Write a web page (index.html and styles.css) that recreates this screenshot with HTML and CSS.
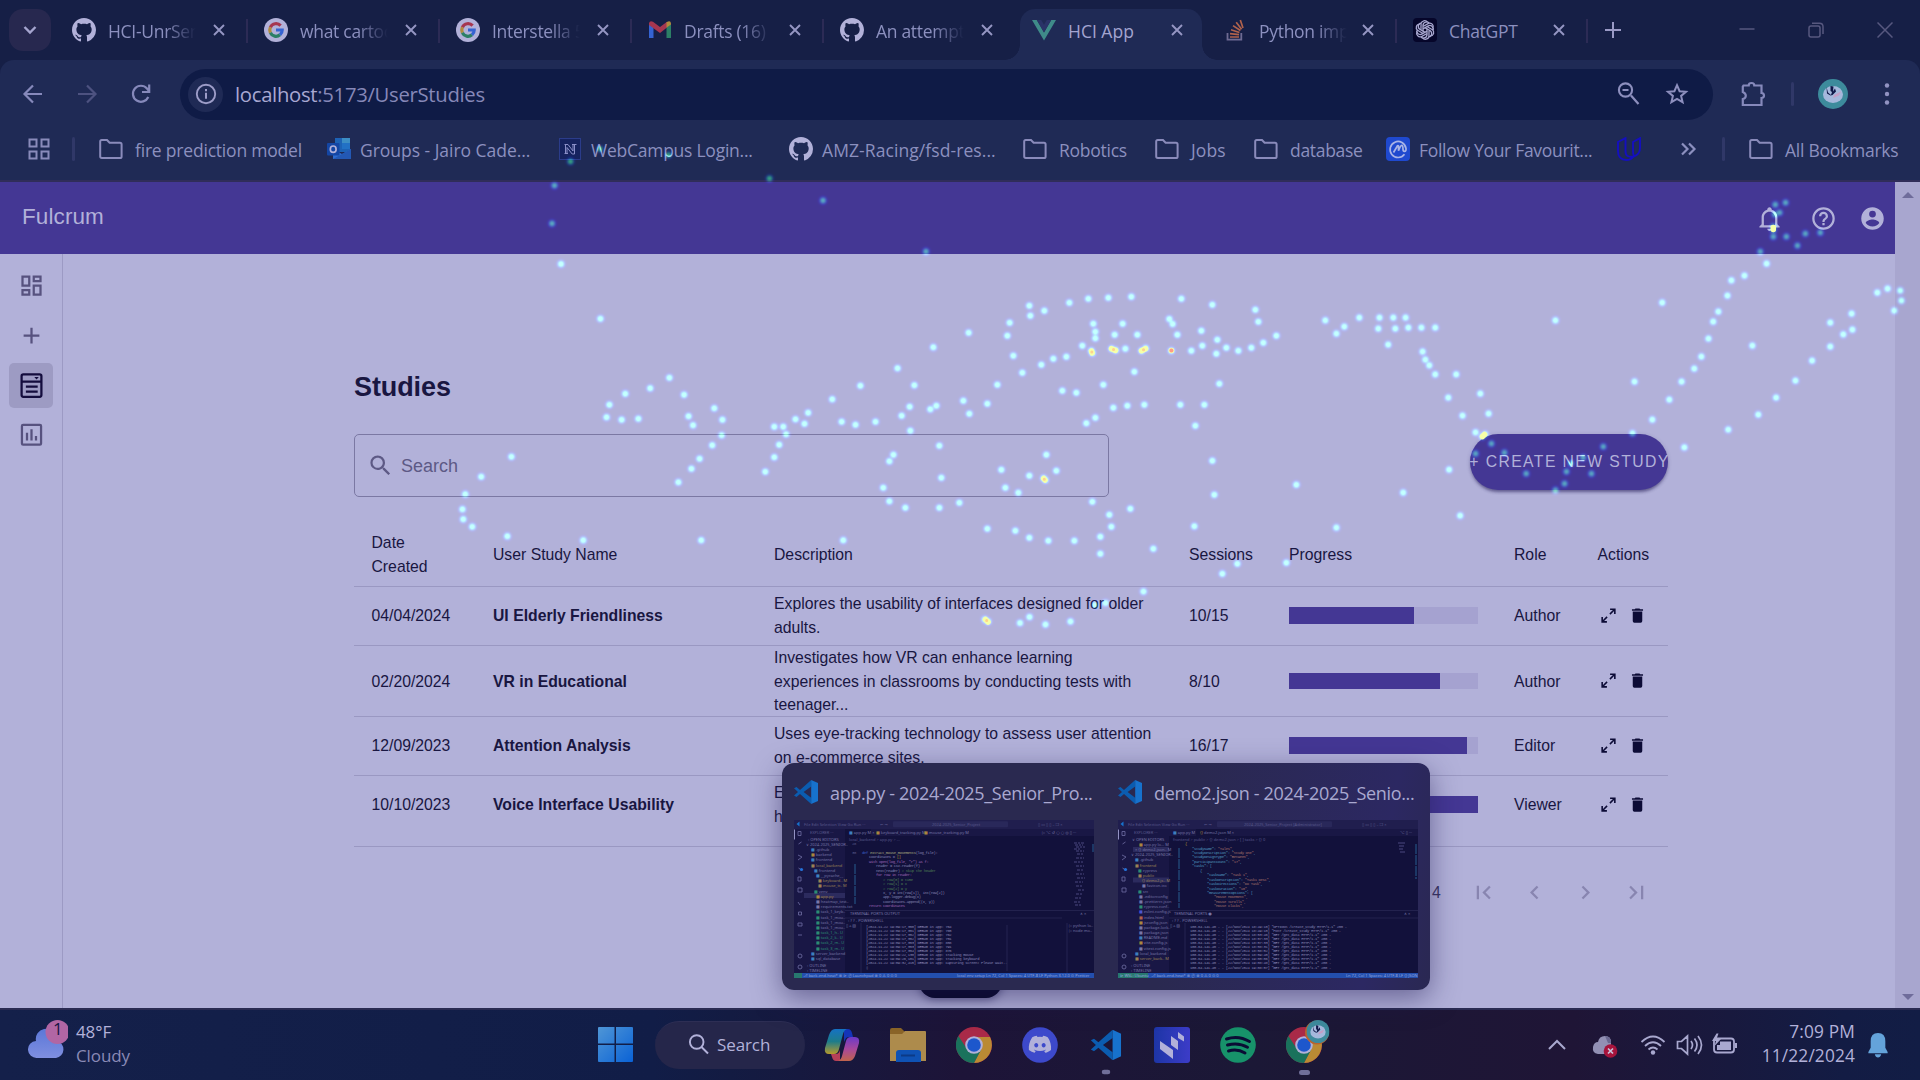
FILE: index.html
```html
<!DOCTYPE html>
<html lang="en">
<head>
<meta charset="utf-8">
<title>HCI App</title>
<link rel="stylesheet" href="styles.css">
</head>
<body>
<svg class="defs" width="0" height="0">
  <defs>
    <symbol id="github" viewBox="0 0 16 16"><path d="M8 0C3.58 0 0 3.58 0 8c0 3.54 2.29 6.53 5.47 7.59.4.07.55-.17.55-.38 0-.19-.01-.82-.01-1.49-2.01.37-2.53-.49-2.69-.94-.09-.23-.48-.94-.82-1.13-.28-.15-.68-.52-.01-.53.63-.01 1.08.58 1.23.82.72 1.21 1.87.87 2.33.66.07-.52.28-.87.51-1.07-1.78-.2-3.64-.89-3.64-3.95 0-.87.31-1.59.82-2.15-.08-.2-.36-1.02.08-2.12 0 0 .67-.21 2.2.82.64-.18 1.32-.27 2-.27.68 0 1.36.09 2 .27 1.53-1.04 2.2-.82 2.2-.82.44 1.1.16 1.92.08 2.12.51.56.82 1.27.82 2.15 0 3.07-1.87 3.75-3.65 3.95.29.25.54.73.54 1.48 0 1.07-.01 1.93-.01 2.2 0 .21.15.46.55.38A8.01 8.01 0 0 0 16 8c0-4.42-3.58-8-8-8z"/></symbol>
    <symbol id="google" viewBox="0 0 24 24"><circle cx="12" cy="12" r="12" fill="#b2b1d9"/><g fill="none" stroke-width="3.2"><path d="M16.600 7.600A6.200 6.200 0 0 0 6.400 9.300" stroke="#a63650"/><path d="M6.400 9.300A6.200 6.200 0 0 0 6.400 14.700" stroke="#b08a3e"/><path d="M6.400 14.700A6.200 6.200 0 0 0 16 16.800" stroke="#2c7f66"/><path d="M16 16.800A6.200 6.200 0 0 0 18.200 12H12" stroke="#3563d2"/></g></symbol>
    <symbol id="folder" viewBox="0 0 24 24"><path d="M1.200 19.600V4.500q0-1.500 1.500-1.500H8l2.600 2.800H21q1.600 0 1.600 1.600v12q0 1.600-1.600 1.600H2.800q-1.600 0-1.600-1.400z" fill="none" stroke="currentColor" stroke-width="2"/></symbol>
    <symbol id="vscode" viewBox="0 0 24 24"><path d="M17.200 0v6.400L9.600 12l7.600 5.700V24L6 14.100l-3.500 2.800L0 15.600 4 12 0 8.300 2.500 7 6 9.900z" fill="#0b5cb0"/><path d="M17.200 0 24 3v18l-6.800 3z" fill="#1772cd"/></symbol>
    <symbol id="chrome" viewBox="0 0 36 36"><circle cx="18" cy="18" r="18" fill="#a92a48"/><path d="M18 10H34A18 18 0 0 1 18 36L25 22z" fill="#ba8a34"/><path d="M2.400 9A18 18 0 0 0 18 36l7-13-7 3-7-4z" fill="#1a725c"/><circle cx="18" cy="18" r="8.800" fill="#b2b1d9"/><circle cx="18" cy="18" r="6.800" fill="#1d57cc"/></symbol>
    <symbol id="avatar" viewBox="0 0 30 30"><circle cx="15" cy="15" r="15" fill="#3d8b9c"/><ellipse cx="15" cy="15.500" rx="10" ry="8.500" fill="#a5b8dc"/><path d="m8.500 8 1.500 5.500 3 2.500 1-3-1.500-1V7l3 .500-.500 5 2-3 1 3-3.500 3.500-2 .5-3.500-2z" fill="#101848"/><path d="m16 16 7-3.500-2 4-6 2.500z" fill="#c59ec5"/></symbol>
    <symbol id="x" viewBox="0 0 12 12"><path d="m1 1 10 10M11 1 1 11" fill="none" stroke="currentColor" stroke-width="1.900"/></symbol>
    <symbol id="search" viewBox="0 0 24 24"><path d="M9.500,3A6.500,6.500 0 0,1 16,9.500C16,11.110 15.410,12.590 14.440,13.730L14.710,14H15.500L20.500,19L19,20.500L14,15.500V14.710L13.730,14.440C12.590,15.410 11.110,16 9.500,16A6.500,6.500 0 0,1 3,9.500A6.500,6.500 0 0,1 9.500,3M9.500,5C7,5 5,7 5,9.500C5,12 7,14 9.500,14C12,14 14,12 14,9.500C14,7 12,5 9.500,5Z"/></symbol>
    <symbol id="trash" viewBox="0 0 24 24"><path d="M19,4H15.500L14.500,3H9.500L8.500,4H5V6H19M6,19A2,2 0 0,0 8,21H16A2,2 0 0,0 18,19V7H6V19Z"/></symbol>
    <symbol id="expand" viewBox="0 0 24 24"><path d="M10,21V19H6.410L10.910,14.500L9.500,13.090L5,17.590V14H3V21H10M14.500,10.910L19,6.410V10H21V3H14V5H17.590L13.090,9.500L14.500,10.910Z"/></symbol>
    <symbol id="chev" viewBox="0 0 24 24"><path d="M15.410,16.580L10.830,12L15.410,7.410L14,6L8,12L14,18L15.410,16.580Z"/></symbol>
    <symbol id="first" viewBox="0 0 24 24"><path d="M18.410,16.590L13.820,12L18.410,7.410L17,6L11,12L17,18L18.410,16.590M6,6H8V18H6V6Z"/></symbol>
  </defs>
</svg>

<header class="tabstrip">
  <div class="tab-search"><svg width="14" height="10" viewBox="0 0 14 10"><path d="m1.500 2 5.500 5.500L12.500 2" fill="none" stroke="currentColor" stroke-width="2.400"/></svg></div>
  <div class="tab"><svg class="fav"><use href="#github"/></svg><span class="title fade">HCI-UnrSen</span><svg class="close"><use href="#x"/></svg></div>
  <div class="tab"><svg class="fav"><use href="#google"/></svg><span class="title fade">what cartoo</span><svg class="close"><use href="#x"/></svg></div>
  <div class="tab"><svg class="fav"><use href="#google"/></svg><span class="title fade">Interstella 5</span><svg class="close"><use href="#x"/></svg></div>
  <div class="tab"><svg class="fav" viewBox="0 0 24 24"><path d="M1 20V6l4.500 3.500V20z" fill="#3563d2"/><path d="M18.500 20V9.500L23 6v14z" fill="#2c7f66"/><path d="M1 7V5q1-3 4-1.200L12 9l7-5.200v5.700L12 15 1 7z" fill="#a63650"/><path d="M18.500 9.800V4.200Q22.500 2 23 5.200v1.300z" fill="#b08a3e"/></svg><span class="title fade">Drafts (16)</span><svg class="close"><use href="#x"/></svg></div>
  <div class="tab bare"><svg class="fav"><use href="#github"/></svg><span class="title fade">An attempt</span><svg class="close"><use href="#x"/></svg></div>
  <div class="tab active bare"><svg class="fav" viewBox="0 0 24 24"><path d="M0 2h4.800L12 14.500 19.200 2H24L12 22.500z" fill="#3f8b89"/><path d="M4.800 2h4.400L12 6.800 14.800 2h4.400L12 14.500z" fill="#2a3368"/></svg><span class="title">HCI App</span><svg class="close"><use href="#x"/></svg></div>
  <div class="tab so"><svg class="fav" viewBox="0 0 24 24"><path d="M4.500 15v6.700h13.800V15" fill="none" stroke="#6e6b93" stroke-width="1.800"/><path d="M7 19h9M7 15.600l9 1M8 11.800l8.400 2.700M10 7.600l7.400 4.900M13.200 4.200l5.400 7M17.300 2l2.700 8" stroke="#b0624c" stroke-width="1.700"/></svg><span class="title fade">Python imp</span><svg class="close"><use href="#x"/></svg></div>
  <div class="tab gpt"><svg class="fav" viewBox="0 0 24 24"><rect width="24" height="24" rx="4" fill="#06062a"/><g fill="none" stroke="#a9a8d0" stroke-width="1.300"><path id="petal" d="M10 13.200V7.100a3.500 3.500 0 0 1 6.500-1.400M10 8.500l5.500-3.100a3.500 3.500 0 0 1 4.300 5"/><use href="#petal" transform="rotate(60 12 12)"/><use href="#petal" transform="rotate(120 12 12)"/><use href="#petal" transform="rotate(180 12 12)"/><use href="#petal" transform="rotate(240 12 12)"/><use href="#petal" transform="rotate(300 12 12)"/></g></svg><span class="title">ChatGPT</span><svg class="close"><use href="#x"/></svg></div>
  <svg class="newtab" width="16" height="16" viewBox="0 0 16 16"><path d="M8 0v16M0 8h16" stroke="currentColor" stroke-width="2"/></svg>
  <div class="wincontrols">
    <svg width="16" height="16" viewBox="0 0 16 16"><path d="M.5 7h15" stroke="currentColor" stroke-width="1.500"/></svg>
    <svg width="16" height="16" viewBox="0 0 16 16"><g fill="none" stroke="currentColor" stroke-width="1.500"><rect x="1" y="4" width="11" height="11" rx="2"/><path d="M4 1.200h7.500q3.500 0 3.500 3.500V12"/></g></svg>
    <svg width="16" height="16" viewBox="0 0 16 16"><path d="m.5.5 15 15M15.500.5l-15 15" stroke="currentColor" stroke-width="1.500"/></svg>
  </div>
</header>

<nav class="toolbar">
  <svg class="tb" viewBox="0 0 54 54"><path d="M36 27H19M27 18.500 18.500 27l8.500 8.500" fill="none" stroke="currentColor" stroke-width="2.200"/></svg>
  <svg class="tb off" viewBox="0 0 54 54"><path d="M18 27h17M27 18.500l8.500 8.500-8.500 8.500" fill="none" stroke="currentColor" stroke-width="2.200"/></svg>
  <svg class="tb" viewBox="0 0 54 54"><path d="M34.300 30A8 8 0 1 1 33 21.500l2 2.500M35.200 17.500V25H28" fill="none" stroke="currentColor" stroke-width="2.200"/></svg>
  <div class="omnibox">
    <span class="info"><svg width="22" height="22" viewBox="0 0 22 22"><circle cx="11" cy="11" r="9.200" fill="none" stroke="currentColor" stroke-width="1.900"/><path d="M11 9.700v6M11 6v2.200" stroke="currentColor" stroke-width="2"/></svg></span>
    <span class="url"><b>localhost</b>:5173/UserStudies</span>
    <svg class="omni-icon" viewBox="0 0 24 24"><path d="M21.500 22 14 13.500M5.500 8h6" fill="none" stroke="currentColor" stroke-width="2.200"/><circle cx="8.500" cy="8" r="6.600" fill="none" stroke="currentColor" stroke-width="2.100"/></svg>
    <svg class="omni-icon" viewBox="0 0 24 24"><path d="m12 3.200 2.600 6 6.400.5-4.900 4.200 1.500 6.300L12 16.900l-5.600 3.300 1.500-6.300L3 9.700l6.400-.5z" fill="none" stroke="currentColor" stroke-width="2"/></svg>
  </div>
  <svg class="ext" viewBox="0 0 26 26"><path d="M3.500 4.500h5.200q0-2.500 2.800-2.500t2.800 2.500h7.200v7.500q2.500.2 2.500 2.500t-2.500 2.500v7H2.800v-6q3-.8 3-3.300T2.800 11V5.500z" fill="none" stroke="currentColor" stroke-width="2.200"/></svg>
  <i class="vsep"></i>
  <svg class="me"><use href="#avatar"/></svg>
  <svg class="kebab" viewBox="0 0 6 24"><circle cx="3" cy="3.500" r="2.200"/><circle cx="3" cy="12" r="2.200"/><circle cx="3" cy="20.500" r="2.200"/></svg>
</nav>

<nav class="bookmarks">
  <svg class="bm-icon apps" viewBox="0 0 24 24"><path d="M2.500 2.500h7v7h-7zM14.500 2.500h7v7h-7zM2.500 14.500h7v7h-7zM14.500 14.500h7v7h-7z" fill="none" stroke="currentColor" stroke-width="2"/></svg>
  <i class="vsep"></i>
  <a><svg class="bm-icon"><use href="#folder"/></svg><span class="fire">fire prediction model</span></a>
  <a><svg class="bm-icon" viewBox="0 0 24 24"><path d="M8 1h15v14H8z" fill="#1d62b5"/><path d="M15 1h8v5h-8z" fill="#3c8dc4"/><path d="M15 6h8v6h-8z" fill="#2271c5"/><path d="m6 12 9 5 9-5v10H6z" fill="#2d6cd0"/><path d="M6 22 24 12v10z" fill="#2358b4"/><rect x="0" y="6" width="12.500" height="12.500" rx="1" fill="#1446a4"/><ellipse cx="6.200" cy="12.200" rx="2.900" ry="3.200" fill="none" stroke="#b2b1d9" stroke-width="1.700"/></svg><span class="groups">Groups - Jairo Cade...</span></a>
  <a><svg class="bm-icon" viewBox="0 0 24 24"><rect x="1.500" y="1.500" width="21" height="21" fill="#16235f" stroke="#2b3c8a"/><path d="M6.500 7.500h3.500l5 6.500V7.500M14 7.500h4.500M16.500 8v9h-2.300L9 10.500V17M6.500 16.500H10M7.500 8v8.500" fill="none" stroke="#8a8fc8" stroke-width="1"/></svg><span>WebCampus Login...</span></a>
  <a><svg class="bm-icon gh"><use href="#github"/></svg><span class="amz">AMZ-Racing/fsd-res...</span></a>
  <a><svg class="bm-icon"><use href="#folder"/></svg><span>Robotics</span></a>
  <a><svg class="bm-icon"><use href="#folder"/></svg><span class="jobs">Jobs</span></a>
  <a><svg class="bm-icon"><use href="#folder"/></svg><span class="db">database</span></a>
  <a><svg class="bm-icon" viewBox="0 0 24 24"><rect width="24" height="24" rx="4" fill="#1f49cf"/><path d="M18.500 17.300a8 8 0 1 1 1.500-6q.3 3-1.500 3-1.500 0-1.500-2 0-4-1.300-4-1.200 0-3.200 5.500V9.500q0-1.200-1-.8L7.500 15.500" fill="none" stroke="#a9b4e6" stroke-width="1.700"/></svg><span class="follow">Follow Your Favourit...</span></a>
  <svg class="bm-icon uda" viewBox="0 0 24 24"><path d="M8.500 1.200 1 5v9q0 9 8.500 9 4.500 0 7-3.500Q23 17.500 23 11V1.200L16 5v9.500q0 3 1 4.800-8.500 2-8.500-5z" fill="none" stroke="#140fc0" stroke-width="1.900"/></svg>
  <svg class="more" viewBox="0 0 18 14"><path d="m2 1.500 5.500 5.500L2 12.500M9 1.500 14.500 7 9 12.500" fill="none" stroke="currentColor" stroke-width="2.200"/></svg>
  <i class="vsep"></i>
  <a><svg class="bm-icon"><use href="#folder"/></svg><span>All Bookmarks</span></a>
</nav>

<div class="viewport">
  <div class="app">
    <header class="appbar">
      <h1>Fulcrum</h1>
      <svg class="mdi bell" viewBox="0 0 24 24"><path d="M10 21H14C14 22.100 13.100 23 12 23S10 22.100 10 21M21 19V20H3V19L5 17V11C5 7.900 7 5.200 10 4.300V4C10 2.900 10.900 2 12 2S14 2.900 14 4V4.300C17 5.200 19 7.900 19 11V17L21 19M17 11C17 8.200 14.800 6 12 6S7 8.200 7 11V18H17V11Z"/></svg>
      <svg class="mdi help" viewBox="0 0 24 24"><path d="M11,18H13V16H11V18M12,2A10,10 0 0,0 2,12A10,10 0 0,0 12,22A10,10 0 0,0 22,12A10,10 0 0,0 12,2M12,20C7.590,20 4,16.410 4,12C4,7.590 7.590,4 12,4C16.410,4 20,7.590 20,12C20,16.410 16.410,20 12,20M12,6A4,4 0 0,0 8,10H10A2,2 0 0,1 12,8A2,2 0 0,1 14,10C14,12 11,11.750 11,15H13C13,12.750 16,12.500 16,10A4,4 0 0,0 12,6Z"/></svg>
      <svg class="mdi account" viewBox="0 0 24 24"><path d="M12,19.200C9.500,19.200 7.290,17.920 6,16C6.030,14 10,12.900 12,12.900C14,12.900 17.970,14 18,16C16.710,17.920 14.500,19.200 12,19.200M12,5A3,3 0 0,1 15,8A3,3 0 0,1 12,11A3,3 0 0,1 9,8A3,3 0 0,1 12,5M12,2A10,10 0 0,0 2,12A10,10 0 0,0 12,22A10,10 0 0,0 22,12C22,6.470 17.500,2 12,2Z"/></svg>
    </header>
    <div class="body">
      <aside class="rail">
        <a><svg class="mdi" viewBox="0 0 24 24"><path d="M19,5V7H15V5H19M9,5V11H5V5H9M19,13V19H15V13H19M9,17V19H5V17H9M21,3H13V9H21V3M11,3H3V13H11V3M21,11H13V21H21V11M11,15H3V21H11V15Z"/></svg></a>
        <a><svg class="mdi" viewBox="0 0 24 24"><path d="M19,13H13V19H11V13H5V11H11V5H13V11H19V13Z"/></svg></a>
        <a class="on"><svg class="mdi" viewBox="0 0 24 24"><g fill="none" stroke="currentColor" stroke-width="2"><rect x="3.200" y="2" width="17.600" height="20" rx="1.500"/><path d="M3 8.500h18M7 13h10.500M7 17.500h10.500"/></g><path d="M14.500 4.500h4l-2 2.200z"/></svg></a>
        <a><svg class="mdi" viewBox="0 0 24 24"><g fill="none" stroke="currentColor" stroke-width="2"><rect x="3.500" y="2.500" width="17" height="17.500" rx="1"/><path d="M8 9.500v7M12 6.500v10M16 12.500v4"/></g></svg></a>
      </aside>
      <main>
        <h2>Studies</h2>
        <div class="controls">
          <div class="searchbox"><svg class="mdi"><use href="#search"/></svg><span>Search</span></div>
          <button class="create"><span>+ CREATE NEW STUDY</span></button>
        </div>
        <section class="grid">
          <div class="row head"><span>Date<br>Created</span><span>User Study Name</span><span>Description</span><span>Sessions</span><span>Progress</span><span>Role</span><span>Actions</span></div>
          <div class="row"><span>04/04/2024</span><b>UI Elderly Friendliness</b><span>Explores the usability of interfaces designed for older<br>adults.</span><span>10/15</span><span><i class="bar"><i style="width:66.4%"></i></i></span><span>Author</span><span class="acts"><svg><use href="#expand"/></svg><svg><use href="#trash"/></svg></span></div>
          <div class="row tall"><span>02/20/2024</span><b>VR in Educational</b><span>Investigates how VR can enhance learning<br>experiences in classrooms by conducting tests with<br>teenager...</span><span>8/10</span><span><i class="bar"><i style="width:80%"></i></i></span><span>Author</span><span class="acts"><svg><use href="#expand"/></svg><svg><use href="#trash"/></svg></span></div>
          <div class="row"><span>12/09/2023</span><b>Attention Analysis</b><span>Uses eye-tracking technology to assess user attention<br>on e-commerce sites.</span><span>16/17</span><span><i class="bar"><i style="width:94.2%"></i></i></span><span>Editor</span><span class="acts"><svg><use href="#expand"/></svg><svg><use href="#trash"/></svg></span></div>
          <div class="row last"><span>10/10/2023</span><b>Voice Interface Usability</b><span>E<br>h</span><span></span><span><i class="bar"><i style="width:100%"></i></i></span><span>Viewer</span><span class="acts"><svg><use href="#expand"/></svg><svg><use href="#trash"/></svg></span></div>
        </section>
        <footer class="pager"><span>4</span><svg><use href="#first"/></svg><svg><use href="#chev"/></svg><svg class="flip"><use href="#chev"/></svg><svg class="flip"><use href="#first"/></svg></footer>
      </main>
    </div>
  </div>
  <div class="scrollbar"><i class="up"></i><i class="down"></i></div>
  <div class="pill"></div>
</div>

<div class="preview">
  <article>
    <h3><svg><use href="#vscode"/></svg><span>app.py - 2024-2025_Senior_Pro...</span></h3>
    <svg class="thumb" viewBox="0 0 300 158">
      <rect width="300" height="158" fill="#12113b"/><rect width="300" height="9" fill="#201e4e"/><rect x="99" y="1.200" width="115" height="6" rx="1" fill="#29285a"/>
      <rect y="9" width="51" height="144" fill="#191745"/><rect x="51" y="9" width="249" height="7" fill="#191745"/><rect x="51" y="9" width="26" height="7" fill="#12113b"/>
      <rect x="10" y="73" width="41" height="5" fill="#2c2b5e"/><path d="M51 90.500h249M51 98h217" stroke="#2b2a58" stroke-width=".7"/>
      <path d="m2.500 4 3-2.500v5z" fill="#1772cd"/><path d="M.5 9.500v10" stroke="#9493c4"/>
      <g fill="none" stroke="#66659a" stroke-width=".9"><path d="M4 11.500h3v4H4zM4.500 24l3-2M4 35l4 2-4 3M4.500 48l3 2M4 57h3v4H4zM4 68h4v4H4zM4 82l2 3M4.500 92h3v3h-3zM4 103h4v3H4zM4 115h4"/><circle cx="6" cy="136" r="2"/><circle cx="6" cy="147" r="2"/></g><circle cx="7.500" cy="49.500" r="1.600" fill="#2471d8"/>
      <g class="tiny dim"><text x="10" y="6">File  Edit  Selection  View  Go  Run  ···</text><text x="86" y="6">← →</text><text x="138" y="6">2024-2025_Senior_Project</text><text x="244" y="6">▯ ▭ ▯ ▯   –    ❐    ×</text><text x="16" y="14">EXPLORER   ···</text></g>
      <g class="tiny"><text x="55" y="14"><tspan fill="#3d7fbe">■</tspan> app.py M ×</text><text x="82" y="14"><tspan fill="#a9873f">■</tspan> keyboard_tracking.py M</text><text x="130" y="14"><tspan fill="#a9873f">■</tspan> mouse_tracking.py M</text><text x="248" y="14">▷ ⌥ ↺ ○ ○ ◎ ▯ ···</text><text x="55" y="20.500" class="dim">local_backend &gt; app.py &gt; ...</text>
      <text x="14" y="20.500">› OPEN EDITORS</text><text x="12" y="25.800">∨ 2024-2025_SENIOR..</text>
      <text x="17" y="31"><tspan fill="#3d7fbe">■</tspan> .github</text><text x="17" y="36.200"><tspan fill="#a9873f">■</tspan> backend</text><text x="17" y="41.400"><tspan fill="#3d7fbe">■</tspan> frontend</text><text x="17" y="46.600" fill="#9a8155">■ local_backend</text><text x="20" y="51.800"><tspan fill="#3d7fbe">■</tspan> frontend</text><text x="22" y="57"><tspan fill="#3d7fbe">■</tspan> __pycache__</text><text x="24" y="62.200" fill="#9a8155">■ keyboard.. M</text><text x="24" y="67.400" fill="#9a8155">■ mouse_tr.. M</text><text x="20" y="72.600"><tspan fill="#2c8c72">■</tspan> venv</text><text x="22" y="77.700" fill="#a9873f">■ app.py</text>
      <text x="22" y="83">■ heatmap_test..</text><text x="22" y="88">■ requirements.txt</text><text x="22" y="93.300"><tspan fill="#2c8c72">■</tspan> task_1_keyb..</text><text x="22" y="98.500"><tspan fill="#2c8c72">■</tspan> task_1_mou..</text><text x="22" y="103.700"><tspan fill="#2c8c72">■</tspan> task_1_mou..</text><text x="22" y="108.900"><tspan fill="#2c8c72">■</tspan> task_1_mou..</text><g fill="#2c8c72"><text x="22" y="114">■ task_1_h..  U</text><text x="22" y="119.300">■ task_2_k..  U</text><text x="22" y="124.400">■ task_2_m..  U</text><text x="22" y="129.600">■ task_3_m..  U</text></g><text x="17" y="134.800"><tspan fill="#3d7fbe">■</tspan> server_backend</text><text x="17" y="140"><tspan fill="#3d7fbe">■</tspan> sql_database</text><text x="13" y="147">› OUTLINE</text><text x="13" y="152">› TIMELINE</text></g>
      <g class="tiny mono"><text x="58" y="25" class="dim">28</text><text x="58" y="34" class="dim">30</text><text x="68" y="34"><tspan fill="#3c5fc4">def</tspan> <tspan fill="#a5a47f">extract_mouse_movements</tspan>(log_file):</text><text x="75" y="38.400">coordinates = <tspan fill="#b99b32">[]</tspan></text><text x="75" y="42.900" fill="#9a63b4">with open(log_file, "r") as f:</text><text x="82" y="47.300">reader = csv.reader(f)</text><text x="82" y="51.700">next(reader)  <tspan fill="#4c7c53"># Skip the header</tspan></text><text x="82" y="56.200" fill="#9a63b4">for row in reader:</text><g fill="#4c7c53"><text x="89" y="60.600"># row[0] = time</text><text x="89" y="65"># row[1] = x</text><text x="89" y="69.500"># row[2] = y</text></g><text x="89" y="74">x, y = int(row[1]), int(row[2])</text><text x="89" y="78.400">app.logger.debug(x)</text><text x="89" y="82.800">coordinates.append((x, y))</text><text x="75" y="87.200" fill="#9a63b4">return coordinates</text></g>
      <path d="M61 44v40M299 24v8" stroke="#275f91" stroke-width="1" stroke-dasharray="10 1"/>
      <path d="M280 23h10M281 25h8M282 27h9M280 29h7M282 31h8M283 34h6M282 38h8M280 42h9M282 46h8M283 50h6M282 54h8M283 58h8M281 62h8M282 66h7M284 70h6M282 74h7M281 78h7M280 82h6M281 85h7" stroke="#4a4980" stroke-width="1.100" stroke-dasharray="3 1 2 1"/>
      <g class="tiny"><text x="56" y="95">TERMINAL     PORTS     OUTPUT</text><text x="54" y="101.500">›  ?  ?  - POWERSHELL</text><text x="286" y="95">∧  ×</text><text x="52" y="107">▯ ▵ ▧</text><text x="275" y="107">▷ python lo..</text><text x="275" y="112">▷ node mo..</text></g>
      <g class="tiny mono"><text x="72" y="107.500">[2024-11-22 19:09:17,350] DEBUG in app: 764</text><text x="72" y="111.600">[2024-11-22 19:09:17,351] DEBUG in app: 765</text><text x="72" y="115.600">[2024-11-22 19:09:17,352] DEBUG in app: 762</text><text x="72" y="119.700">[2024-11-22 19:09:17,352] DEBUG in app: 751</text><text x="72" y="123.800">[2024-11-22 19:09:17,353] DEBUG in app: 808</text><text x="72" y="127.800">[2024-11-22 19:09:17,353] DEBUG in app: 791</text><text x="72" y="131.900">[2024-11-22 19:09:17,354] DEBUG in app: 876</text><text x="72" y="136">[2024-11-22 19:09:22,130] DEBUG in app: tracking mouse</text><text x="72" y="140">[2024-11-22 19:09:26,101] DEBUG in app: tracking keyboard</text><text x="72" y="144.100">[2024-11-22 19:09:32,415] DEBUG in app: Capturing screen! Please wait..</text><text x="72" y="149">▯</text></g><path d="M67 103v50M273 103v50M213 105v46" stroke="#2b2a58" stroke-width=".8"/>
      <rect y="153" width="300" height="5" fill="#234fae"/><rect y="153" width="8" height="5" fill="#27786f"/><g class="tiny bright"><text x="9" y="157">⎇ back-end-heat* ⊗ ⊳  Ⓟ Launchpad  ⊗ 0 ⚠ 0  ⊙ 0</text><text x="163" y="157">local env setup  Ln 72, Col 1  Spaces: 4  UTF-8  LF  Python  3.12.0  ⊙ Prettier</text></g>
    </svg>
  </article>
  <article>
    <h3><svg><use href="#vscode"/></svg><span>demo2.json - 2024-2025_Senio...</span></h3>
    <svg class="thumb" viewBox="0 0 300 158">
      <rect width="300" height="158" fill="#12113b"/><rect width="300" height="9" fill="#201e4e"/><rect x="99" y="1.200" width="115" height="6" rx="1" fill="#29285a"/>
      <rect y="9" width="51" height="144" fill="#191745"/><rect x="51" y="9" width="249" height="7" fill="#191745"/><rect x="78" y="9" width="34" height="7" fill="#12113b"/>
      <rect x="15" y="27" width="36" height="5" fill="#2c2b5e"/><rect x="15" y="57.500" width="36" height="5" fill="#2c2b5e"/><path d="M51 90.500h249M51 98h249" stroke="#2b2a58" stroke-width=".7"/>
      <path d="m2.500 4 3-2.500v5z" fill="#1772cd"/><path d="M.5 9.500v10" stroke="#9493c4"/>
      <g fill="none" stroke="#66659a" stroke-width=".9"><path d="M4 11.500h3v4H4zM4.500 24l3-2M4 35l4 2-4 3M4.500 48l3 2M4 57h3v4H4zM4 68h4v4H4z"/><circle cx="6" cy="136" r="2"/><circle cx="6" cy="147" r="2"/></g><circle cx="7.500" cy="49.500" r="1.600" fill="#2471d8"/>
      <g class="tiny dim"><text x="10" y="6">File  Edit  Selection  View  Go  Run  ···</text><text x="86" y="6">← →</text><text x="126" y="6">2024-2025_Senior_Project [Administrator]</text><text x="244" y="6">▯ ▭ ▯ ▯   –    ❐    ×</text><text x="16" y="14">EXPLORER   ···</text></g>
      <g class="tiny"><text x="55" y="14"><tspan fill="#3d7fbe">■</tspan> app.py  M</text><text x="82" y="14"><tspan fill="#a9873f">{}</tspan> demo2.json M ×</text><text x="282" y="14">⌥ ▯ ···</text><text x="55" y="20.500" class="dim">frontend &gt; public &gt; {} demo2.json &gt; [ ] tasks &gt; {} 0</text>
      <text x="14" y="20.500">∨ OPEN EDITORS</text><text x="21" y="26"><tspan fill="#a9873f">■</tspan> app.py lo...  M</text><text x="17" y="31">× {} demo2.json..  M</text><text x="13" y="36.200">∨ 2024-2025_SENIOR..</text><text x="17" y="41.400"><tspan fill="#3d7fbe">■</tspan> .github</text><text x="17" y="46.600" fill="#9a8155">■ frontend</text><text x="20" y="51.800"><tspan fill="#2c8c72">■</tspan> cypress</text><text x="20" y="57" fill="#9a8155">■ public</text><text x="24" y="62.200" fill="#9a8155">{} demo2.js.. M</text><text x="24" y="67.400">■ favicon.ico</text><text x="20" y="72.600"><tspan fill="#2c8c72">■</tspan> src</text><text x="21" y="77.700">■ .editorconfig</text><text x="21" y="83">■ .prettierrc.json</text><text x="21" y="88"><tspan fill="#2c8c72">■</tspan> cypress.conf..</text><text x="21" y="93.300"><tspan fill="#4b56d0">■</tspan> eslint.config.js</text><text x="21" y="98.500"><tspan fill="#b0624c">■</tspan> index.html</text><text x="21" y="103.700"><tspan fill="#a9873f">■</tspan> jsconfig.json</text><text x="21" y="108.900">■ package-lock..</text><text x="21" y="114">■ package.json</text><text x="21" y="119.300"><tspan fill="#3d7fbe">■</tspan> README.md</text><text x="21" y="124.400"><tspan fill="#a9873f">■</tspan> vite.config.js</text><text x="21" y="129.600">■ vitest.config.js</text><text x="17" y="134.800"><tspan fill="#3d7fbe">■</tspan> local_backend</text><text x="17" y="140" fill="#9a8155">■ server_back..  M</text><text x="13" y="147">› OUTLINE</text><text x="13" y="152">› TIMELINE</text></g>
      <g class="tiny mono"><g fill="#4f93bd"><text x="67" y="25" fill="#b99b32">{</text><text x="74" y="29.500">"studyName": <tspan fill="#a06e6a">"Tales"</tspan>,</text><text x="74" y="34">"studyDescription": <tspan fill="#a06e6a">"Study One"</tspan>,</text><text x="74" y="38.400">"studyDesignType": <tspan fill="#a06e6a">"Between"</tspan>,</text><text x="74" y="42.900">"participantCount": <tspan fill="#a06e6a">"17"</tspan>,</text><text x="74" y="47.300">"tasks": [</text><text x="82" y="51.700">{</text><text x="89" y="56.200">"taskName": <tspan fill="#a06e6a">"Task 1"</tspan>,</text><text x="89" y="60.600">"taskDescription": <tspan fill="#a06e6a">"Task1 Desc"</tspan>,</text><text x="89" y="65">"taskDirections": <tspan fill="#a06e6a">"Do Task"</tspan>,</text><text x="89" y="69.500">"taskDuration": <tspan fill="#a06e6a">"10"</tspan>,</text><text x="89" y="74">"measurementOptions": [</text></g><g fill="#a06e6a"><text x="96" y="78.400">"Mouse Movement",</text><text x="96" y="82.800">"Mouse Scrolls",</text><text x="96" y="87.200">"Mouse Clicks",</text></g></g>
      <path d="M61 28v60M298 24v35" stroke="#275f91" stroke-width="1" stroke-dasharray="10 1"/><path d="M280 23h7M281 26h5M281 29h4M282 32h5" stroke="#4a4980" stroke-width="1.100"/>
      <g class="tiny"><text x="56" y="95">TERMINAL     PORTS  ●</text><text x="54" y="101.500">›  ?  ?  - POWERSHELL</text><text x="286" y="95">∧  ×</text><text x="52" y="107">▯ ▵ ▧</text></g>
      <g class="tiny mono"><text x="72" y="107.500">100.64.141.40 - - [22/Nov/2024 18:49:10] "OPTIONS /create_study HTTP/1.1" 200 -</text><text x="72" y="111.600">100.64.141.40 - - [22/Nov/2024 18:49:10] "POST /create_study HTTP/1.1" 200 -</text><text x="72" y="115.600">100.64.141.40 - - [22/Nov/2024 18:53:46] "GET /get_data HTTP/1.1" 200 -</text><text x="72" y="119.700">100.64.141.40 - - [22/Nov/2024 18:57:33] "GET /get_data HTTP/1.1" 200 -</text><text x="72" y="123.800">100.64.141.40 - - [22/Nov/2024 18:57:33] "GET /get_data HTTP/1.1" 200 -</text><text x="72" y="127.800">100.64.141.40 - - [22/Nov/2024 18:58:31] "GET /get_data HTTP/1.1" 200 -</text><text x="72" y="131.900">100.64.141.40 - - [22/Nov/2024 18:58:52] "GET /get_data HTTP/1.1" 200 -</text><text x="72" y="136">100.64.141.40 - - [22/Nov/2024 18:59:40] "GET /get_data HTTP/1.1" 200 -</text><text x="72" y="140">100.64.141.40 - - [22/Nov/2024 19:00:06] "GET /get_data HTTP/1.1" 200 -</text><text x="72" y="144.100">100.64.141.40 - - [22/Nov/2024 19:08:48] "GET /get_data HTTP/1.1" 200 -</text><text x="72" y="148.500">100.64.141.40 - - [22/Nov/2024 19:08:57] "GET /get_data HTTP/1.1" 200 -</text></g><path d="M67 103v50" stroke="#2b2a58" stroke-width=".8"/>
      <rect y="153" width="300" height="5" fill="#234fae"/><rect y="153" width="30" height="5" fill="#27786f"/><g class="tiny bright"><text x="2" y="157">⊳ WSL: Ubuntu</text><text x="33" y="157">⎇ back-end-heat* ⊗   Ⓟ ⊗ 0 ⚠ 0  ⊙ 0</text><text x="228" y="157">Ln 72, Col 1  Spaces: 4  UTF-8  LF  {} JSON</text></g>
    </svg>
  </article>
</div>

<footer class="taskbar">
  <div class="weather">
    <svg width="40" height="46" viewBox="0 0 40 46"><defs><linearGradient id="cl" x2="0" y2="1"><stop stop-color="#5b77d8"/><stop offset="1" stop-color="#7f8fe0"/></linearGradient></defs><path d="M9 39a8.500 8.500 0 0 1-1-17 10 10 0 0 1 20-4l1 4a8.700 8.700 0 0 1-1 17z" fill="url(#cl)"/><circle cx="29.500" cy="13" r="12" fill="#b166a4"/></svg>
    <b>1</b>
    <p>48°F<br><span>Cloudy</span></p>
  </div>
  <svg class="win" viewBox="0 0 35 35"><defs><linearGradient id="wn" x2="1" y2="1"><stop stop-color="#4f96d6"/><stop offset="1" stop-color="#0a62d6"/></linearGradient></defs><path d="M0 1q0-1 1-1h15.500v16.500H0zM18 0h16q1 0 1 1v15.500H18zM0 18h16.500v17H1q-1 0-1-1zM18 18h17v16q0 1-1 1H18z" fill="url(#wn)"/></svg>
  <div class="tsearch"><svg width="21" height="21" viewBox="0 0 21 21"><circle cx="8.700" cy="8" r="6.800" fill="none" stroke="currentColor" stroke-width="1.900"/><path d="m13.500 13 6.500 6.500" stroke="currentColor" stroke-width="2"/></svg><span>Search</span></div>
  <div class="pins">
    <svg viewBox="0 0 36 36"><defs><linearGradient id="c1" x2="0" y2="1"><stop stop-color="#1672c4"/><stop offset=".5" stop-color="#1d7c8a"/><stop offset="1" stop-color="#b69a2c"/></linearGradient><linearGradient id="c2" x2="0" y2="1"><stop stop-color="#6a3ac8"/><stop offset=".5" stop-color="#a8489c"/><stop offset="1" stop-color="#c0644c"/></linearGradient></defs><path d="M20 2h4q3 0 4 4l1 4h-4q-3 0-4 3l-1 2z" fill="#1434b8"/><path d="M16 34h-4q-3 0-4-4l-1-3h5q3 0 4-4z" fill="#b64058"/><path d="M11 2h12q-3 1-4 5l-4 15q-1 5-5 5H5q-5 0-4-6L5 8q2-6 6-6z" fill="url(#c1)"/><path d="M25 34H14q3-1 4-5l4-15q1-4 5-4h4q5 0 4 6l-4 13q-2 5-6 5z" fill="url(#c2)"/></svg>
    <svg viewBox="0 0 36 36"><path d="M0 3q0-2 2-2h9l4 4v5H0z" fill="#8a6428"/><path d="M0 7h12l3-3h20q1 0 1 1v29H0z" fill="#ad8b4c"/><path d="M6 35v-9q0-3 3-3h19q3 0 3 3v9z" fill="#0f52b4"/><path d="M11 28.500h14" stroke="#0c3a86" stroke-width="2"/></svg>
    <svg><use href="#chrome"/></svg>
    <svg viewBox="0 0 36 36"><circle cx="18" cy="18" r="17.800" fill="#3d49cb"/><path fill="#b2b1d9" transform="translate(6.800 6.200) scale(.93)" d="M20.317 4.370a19.800 19.800 0 00-4.885-1.515c-.25.400-.500.900-.687 1.287a18.300 18.300 0 00-5.487 0c-.180-.400-.430-.900-.690-1.287a19.700 19.700 0 00-4.885 1.515C.533 9.046-.319 13.580.099 18.058c2.053 1.500 4.080 2.470 6.080 3.080.480-.640.900-1.310 1.260-2.020a12 12 0 01-1.960-.950l.470-.370c3.930 1.800 8.180 1.800 12.060 0l.480.370c-.620.370-1.250.680-1.960.950.360.700.780 1.380 1.260 2.020 2-.610 4-1.530 6.100-3.080.500-5.177-.838-9.674-3.549-13.660zM8.020 15.330c-1.180 0-2.157-1.085-2.157-2.418s.956-2.419 2.157-2.419c1.210 0 2.176 1.095 2.157 2.419 0 1.333-.956 2.419-2.157 2.419zm7.975 0c-1.183 0-2.157-1.085-2.157-2.418s.955-2.419 2.157-2.419c1.210 0 2.176 1.095 2.157 2.419 0 1.333-.946 2.419-2.157 2.419z"/></svg>
    <svg viewBox="-2 -2 38 38"><use href="#vscode" x="1" y="1" width="32" height="32"/><rect x="12.500" y="43" width="9" height="5" rx="2.500" fill="#706f99"/></svg>
    <svg viewBox="0 0 36 36"><defs><linearGradient id="nn" x2="1" y2="0"><stop stop-color="#1d35a6"/><stop offset="1" stop-color="#3c3cc8"/></linearGradient></defs><rect width="36" height="36" rx="3" fill="url(#nn)"/><path d="M6 14 19 23v9L6 22zM17 9l7 5v9l-7-5zM24 5l6 4.500v5L24 11z" fill="#b2b1d9"/></svg>
    <svg viewBox="0 0 36 36"><circle cx="18" cy="18" r="17.800" fill="#17926a"/><path d="M6.500 12q12-4 23 2.500M7.500 18q11-3 20 2.200M8.500 24q9-2.500 16.500 2" fill="none" stroke="#0a0c34" stroke-width="3" stroke-linecap="round"/></svg>
    <svg viewBox="0 0 36 36"><use href="#chrome"/><circle cx="31" cy="5.500" r="12" fill="#b8632f"/><use href="#avatar" x="20.500" y="-7" width="23" height="23"/><rect x="13" y="43" width="11" height="5" rx="2.500" fill="#706f99"/></svg>
  </div>
  <div class="tray">
    <svg class="up" viewBox="0 0 36 36"><path d="m10 22 8-8 8 8" fill="none" stroke="currentColor" stroke-width="2"/></svg>
    <svg class="cloud" viewBox="0 0 36 36"><path d="M12 27q-6-1-5-7 1-5 5-5 1-6 7-6t6 6v12z" fill="#9290b4"/><path d="m19 9q6 0 6 7h-3z" fill="#6a6890"/><circle cx="24.500" cy="24" r="6.800" fill="#a6143c"/><path d="m22 21.500 5 5m0-5-5 5" stroke="#c9c3dc" stroke-width="1.700"/></svg>
    <svg viewBox="0 0 36 36"><g fill="none" stroke="currentColor" stroke-width="1.800"><path d="M6.500 15q11.500-11 23 0M10 19q8-7.500 16 0M13.500 22.500q4.500-4 9 0"/></g><circle cx="18" cy="25.500" r="2.200"/></svg>
    <svg viewBox="0 0 36 36"><g fill="none" stroke="currentColor" stroke-width="1.700"><path d="M6.500 14.500h4l6-5.500v18l-6-5.500h-4zM20 14q3 4 0 8M23.500 11.500q5 6.500 0 13M27 9q7 9 0 18"/></g></svg>
    <svg viewBox="0 0 36 36"><rect x="7" y="11.500" width="20" height="14" rx="3" fill="none" stroke="currentColor" stroke-width="1.800"/><path d="M10 18h14v5H10zM13 14.500h11V20H13zM28 16h2v5h-2z"/><path d="M9.500 6.500 5 14h4l-1.500 5L14 12h-4.500l2-5.500z"/></svg>
  </div>
  <p class="clock">7:09 PM<br>11/22/2024</p>
  <svg class="tbell" viewBox="0 0 24 28"><path d="M12 1q8 0 8 9v7l2.500 4.500V23h-21v-1.500L4 17v-7q0-9 8-9zM8.500 24h7q-1 3.500-3.500 3.500T8.500 24z" fill="#64a3da"/></svg>
</footer>

<svg class="gaze" width="1920" height="1080" viewBox="0 0 1920 1080">
  <defs>
    <g id="points">
      <path d="M570.500 161.500h0M554.500 185.500h0M552 223.500h0M600 149h0M668.500 155h0M769.500 178.500h0M823 200.500h0M926 251.500h0M561 264h0M1143.500 591.500h0M1095 605h0M1105.500 603h0M1020 623h0M1029.500 617h0M1045.500 624.500h0M1070.500 621.500h0M985 619.500h0M988 621.500h0"/>
      <path transform="translate(460 280) scale(.40816 .33333)" d="M344 116h0M513 293h0M466 325h0M405 341h0M366 374h0M359 412h0M396 419h0M437 416h0M549 344h0M623 385h0M560 409h0M571 436h0M643 419h0M641 466h0M618 496h0M587 536h0M567 566h0M535 607h0M126 530h0M52 590h0M13 643h0M6 688h0M8 718h0M30 740h0M116 769h0M302 781h0M591 781h0M939 781h0M770 440h0M792 440h0M799 463h0M782 494h0M770 532h0M748 575h0M822 418h0M844 431h0M853 398h0M912 358h0M981 317h0M935 425h0M969 434h0M1018 425h0M1072 265h0M1062 524h0M1052 544h0M1037 623h0M1052 664h0"/>
      <path transform="translate(900 270) scale(.33333)" d="M100 232h0M206 188h0M43 346h0M29 410h0M5 437h0M31 482h0M91 418h0M109 407h0M190 392h0M208 431h0M262 401h0M292 344h0M367 308h0M340 257h0M322 197h0M329 158h0M388 107h0M391 137h0M433 122h0M508 98h0M565 86h0M625 83h0M694 80h0M844 86h0M937 104h0M1066 119h0M1075 155h0M580 161h0M586 185h0M586 205h0M547 227h0M574 242h0M577 249h0M644 194h0M668 161h0M712 194h0M635 236h0M647 241h0M676 236h0M725 242h0M737 235h0M808 147h0M818 162h0M832 194h0M814 242h0M874 242h0M904 182h0M907 227h0M952 209h0M949 251h0M979 233h0M1015 242h0M1054 233h0M1090 218h0M1129 197h0M424 284h0M460 266h0M499 260h0M487 362h0M529 368h0M610 344h0M703 305h0M559 460h0M586 443h0M640 413h0M682 407h0M733 404h0M841 404h0M913 404h0M958 341h0M886 467h0M937 572h0M943 674h0M883 769h0M1189 644h0M118 527h0M124 623h0M16 713h0M118 713h0M178 698h0M304 599h0M316 653h0M355 668h0M388 617h0M439 554h0M469 602h0M431 625h0M436 630h0M262 776h0M346 782h0M388 803h0M445 812h0M523 812h0M577 695h0M628 734h0M634 770h0M601 800h0M601 851h0M691 716h0M760 836h0M1012 881h0M967 911h0M1159 878h0"/>
      <path transform="translate(1300 180) scale(.39541 .33333)" d="M64 421h0M92 461h0M112 440h0M150 413h0M201 413h0M236 413h0M267 413h0M198 446h0M241 446h0M274 443h0M307 443h0M342 443h0M223 494h0M310 515h0M317 539h0M327 556h0M342 583h0M395 583h0M375 653h0M411 707h0M456 641h0M477 701h0M444 757h0M461 770h0M468 763h0M484 791h0M517 818h0M444 821h0M377 869h0M261 938h0M405 1007h0M92 1043h0M572 881h0M646 930h0M669 911h0M674 875h0M685 850h0M716 833h0M737 881h0M767 800h0M646 421h0M916 368h0M846 605h0M841 760h0M891 719h0M934 659h0M965 605h0M997 566h0M1015 530h0M1033 476h0M1045 425h0M1058 395h0M1081 347h0M1091 301h0M1124 287h0M1180 251h0M1164 215h0M1144 497h0M972 802h0M1083 749h0M1159 704h0M1204 653h0M1253 602h0M1295 542h0M1341 500h0M1374 463h0M1397 449h0M1341 428h0M1395 401h0M1460 338h0M1486 326h0M1518 332h0M1521 362h0M1503 392h0M1202 74h0M1228 68h0M1213 98h0M1201 103h0M1197 140h0M1197 150h0M1197 170h0M1230 170h0M1258 197h0M1278 161h0M1316 158h0"/>
    </g>
    <filter id="soft" x="0" y="0" width="1920" height="1080" filterUnits="userSpaceOnUse" color-interpolation-filters="sRGB"><feGaussianBlur stdDeviation=".9"/></filter>
  </defs>
  <use class="halo" href="#points"/>
  <use class="ring" href="#points"/>
  <use class="core" href="#points"/>
</svg>

<!-- Spots where several gaze samples pile up -->
<svg class="peaks" width="1920" height="1080" viewBox="0 0 1920 1080">
  <path class="warm" d="M985.500 619.500l2.500 2.500M1091.500 351l.7 2M1111.500 348.700l4 1.700M1141.500 350.700l4-2M1171.300 350.500h.2M1043.700 478.500l1.300 1.500M1482.500 436.500l2-2M1773.300 227.500v2"/>
  <path class="hot" d="M1091.800 352h0M1044.300 479.300h0M986.700 620.500h0M1113.500 349.500h.1M1143.500 349.700h.1"/>
  <path class="hottest" d="M1171.400 350.500h0"/>
</svg>
</body>
</html>
```
FILE: styles.css
```css
* { box-sizing: border-box; }

html { background: #161f46; }

body {
  margin: 0;
  width: 1920px;
  height: 1080px;
  overflow: hidden;
  display: flex;
  flex-direction: column;
  position: relative;
  isolation: isolate;
  background: #b2b1d9;
  font-family: "Open Sans", "Noto Sans", sans-serif;
  color: #8c90bf;
}

h1, h2, h3, p { margin: 0; font-weight: normal; }
svg { display: block; flex: none; fill: currentColor; }
.defs { position: absolute; }

/* Tab strip */
.tabstrip {
  flex: none;
  height: 60px;
  background: #161f46;
  display: flex;
  align-items: center;
  position: relative;
}
.tab-search {
  width: 42px;
  height: 42px;
  margin: 0 5px 0 9px;
  border-radius: 14px;
  background: #27284f;
  color: #a5a5cf;
  display: grid;
  place-items: center;
}
.tab {
  width: 192px;
  height: 51px;
  padding: 0 0 9px 16px;
  align-self: flex-end;
  display: flex;
  align-items: center;
  background: linear-gradient(#2c2b55, #2c2b55) 190px 10px / 2px 24px no-repeat;
}
.bare { background: none; }
.tab .fav { width: 24px; height: 24px; color: #b2b1d9; }
.title {
  width: 90px;
  margin-left: 12px;
  font-size: 17.5px;
  letter-spacing: -0.3px;
  line-height: 24px;
  white-space: nowrap;
  overflow: hidden;
  padding-top: 2px;
}
.fade {
  width: 88px;
  margin-right: 2px;
  -webkit-mask-image: linear-gradient(90deg, #000 65%, transparent 100%);
  mask-image: linear-gradient(90deg, #000 65%, transparent 100%);
}
.close { width: 12px; height: 12px; margin-left: 15px; color: #9596c3; }
.active {
  width: 182px;
  margin: 0 5px 0 4px;
  padding-left: 12px;
  background: #1f2a55;
  border-radius: 15px 15px 0 0;
  color: #a3a4d0;
  position: relative;
}
.active .title { width: 88px; letter-spacing: 0; }
.active::before, .active::after {
  content: "";
  position: absolute;
  bottom: 0;
  width: 15px;
  height: 15px;
}
.active::before { left: -15px; background: radial-gradient(circle at 0 0, transparent 14.5px, #1f2a55 15px); }
.active::after { right: -15px; background: radial-gradient(circle at 100% 0, transparent 14.5px, #1f2a55 15px); }
.so { width: 190px; background-position: 188px 10px; }
.so .close { margin-left: 13px; }
.gpt { width: 191px; background-position: 189px 10px; }
.gpt .close { margin-left: 14px; }
.newtab { margin-left: 17px; color: #9a9ac6; }
.wincontrols { margin-left: auto; padding-right: 27px; display: flex; gap: 53px; color: #57587f; }

/* Toolbar */
.toolbar {
  flex: none;
  height: 68px;
  padding-left: 6px;
  background: linear-gradient(#161f46, #161f46) 0 0 / 100% 16px no-repeat;
  display: flex;
  align-items: center;
  position: relative;
  z-index: 0;
}
.toolbar::before {
  content: "";
  position: absolute;
  inset: 0;
  z-index: -1;
  background: #1f2a55;
  border-radius: 14px 14px 0 0;
}
.tb { width: 54px; height: 54px; color: #8689bb; }
.off { color: #4d5280; }
.omnibox {
  width: 1533px;
  height: 51px;
  margin-left: 12px;
  padding: 0 24px 0 8px;
  border-radius: 26px;
  background: #0f1b46;
  color: #8688b8;
  display: flex;
  align-items: center;
}
.info {
  width: 35px;
  height: 35px;
  border-radius: 50%;
  background: #1f2a55;
  color: #9d9dc8;
  display: grid;
  place-items: center;
}
.url { margin-left: 12px; font-size: 20.3px; letter-spacing: -0.3px; }
.url b { font-weight: normal; color: #a8a8d2; }
.omni-icon { width: 24px; height: 24px; color: #8d8fbe; }
.url + .omni-icon { margin-left: auto; margin-right: 24px; }
.ext { width: 26px; height: 26px; margin-left: 27px; color: #8689bb; }
.vsep { display: block; width: 3px; height: 24px; border-radius: 2px; background: #303868; }
.toolbar .vsep { margin-left: 25px; }
.me { width: 30px; height: 30px; margin-left: 24px; }
.kebab { width: 6px; height: 24px; margin-left: 36px; color: #9293c2; }

/* Bookmarks */
.bookmarks {
  flex: none;
  height: 54px;
  padding: 0 0 10px 27px;
  background: #1f2a55;
  border-bottom: 2px solid #302d59;
  display: grid;
  grid-template-columns: 45px 27px 228px 231px 231px 234px 132px 99px 132px 231px 63px 42px 27px 171px;
  align-items: center;
  font-size: 17.5px;
  letter-spacing: -0.25px;
}
.bookmarks a { display: flex; align-items: center; gap: 12px; white-space: nowrap; }
.bookmarks a:nth-of-type(2), .bookmarks a:nth-of-type(3), .bookmarks a:nth-of-type(4), .bookmarks a:nth-of-type(8) { gap: 9px; }
.bookmarks span { padding-top: 1px; }
.bookmarks .fire { letter-spacing: -0.2px; }
.bookmarks .groups { letter-spacing: -0.03px; }
.bookmarks .amz { letter-spacing: 0.08px; }
.bookmarks .jobs { letter-spacing: 0.1px; }
.bookmarks .db, .bookmarks .follow { letter-spacing: -0.3px; }
.bm-icon { width: 24px; height: 24px; color: #8a8bbb; }
.gh { color: #b2b1d9; }
.more { width: 18px; height: 14px; }

/* Web page */
.viewport { flex: none; height: 826px; display: flex; position: relative; font-family: "Liberation Sans", Arial, sans-serif; }
.app { width: 1895px; }
.appbar {
  height: 72px;
  padding: 0 9px 0 22px;
  background: #443794;
  color: #b2b1d9;
  display: flex;
  align-items: center;
}
.appbar h1 { font-size: 22.5px; letter-spacing: 0.1px; margin-right: auto; padding-bottom: 2px; }
.mdi { width: 27px; height: 27px; }
.help { margin: 0 22px 0 27px; }
.body { height: 754px; display: flex; }
.rail {
  width: 63px;
  padding: 9px 0 0 9px;
  border-right: 1px solid #9c9ac4;
  display: flex;
  flex-direction: column;
  gap: 5px;
  color: #57527f;
}
.rail a { width: 44px; height: 45px; border-radius: 5px; display: grid; place-items: center; }
.rail .on { background: #9d9bc3; color: #140d3d; }

main { width: 1314px; margin-left: 291px; padding-top: 115px; color: #191641; }
h2 { font-size: 27px; line-height: 36px; font-weight: bold; letter-spacing: -0.1px; }
.controls { margin-top: 29px; height: 63px; display: flex; justify-content: space-between; align-items: flex-start; }
.searchbox {
  width: 755px;
  height: 63px;
  padding-left: 12px;
  border: 1px solid #7b78a3;
  border-radius: 5px;
  display: flex;
  align-items: center;
  gap: 7px;
  font-size: 18px;
  color: #5d5985;
}
.searchbox span { padding-top: 2px; }
.create {
  width: 198px;
  height: 56px;
  padding: 0;
  border: 0;
  border-radius: 28px;
  background: #443794;
  box-shadow: 0 3px 3px -1px rgba(40, 32, 90, .5), 0 1px 4px rgba(40, 32, 90, .2);
  color: #b2b1d9;
  font: 15.75px "Liberation Sans", Arial, sans-serif;
  letter-spacing: 1.41px;
  display: flex;
  justify-content: center;
  align-items: center;
  white-space: nowrap;
}
.create span { margin-left: 1px; }

.grid { margin-top: 26px; font-size: 15.75px; line-height: 23.6px; }
.row {
  height: 59px;
  border-bottom: 1px solid #9a98c2;
  display: grid;
  grid-template-columns: 121px 281px 415px 100px 225px 83px 89px;
  align-items: center;
  white-space: nowrap;
}
.row > * { padding-left: 18px; }
.row > :first-child { padding-left: 17.5px; }
.row > :last-child { padding-left: 18.5px; }
.head { height: 64px; padding-top: 1px; }
.tall { height: 71px; padding-bottom: 1px; }
.last { height: 71px; padding-bottom: 12px; }
.bar { display: block; width: 189px; height: 17px; background: #a5a2d0; }
.row:not(.tall) .bar { margin-top: -1px; }
.tall .bar { height: 16px; }
.bar i { display: block; height: 100%; background: #443794; }
.acts { display: flex; gap: 9px; color: #0c0b36; }
.acts svg { width: 19px; height: 19px; margin: -1px 0 0 1px; }

.pager { display: flex; align-items: center; height: 27px; margin-top: 32px; padding-left: 1078px; font-size: 15.75px; color: #3a3663; }
.pager svg { width: 27px; height: 27px; margin-left: 24px; color: #8885b0; }
.pager span + svg { margin-left: 29px; }
.flip { transform: scaleX(-1); }

.scrollbar {
  width: 25px;
  background: #a8a6cf;
  display: flex;
  flex-direction: column;
  justify-content: space-between;
  align-items: center;
  padding: 10px 0 8px;
}
.scrollbar i { border: 6px solid transparent; }
.scrollbar .up { border-top: 0; border-bottom-color: #6f6c9b; }
.scrollbar .down { border-bottom: 0; border-top-color: #6f6c9b; }
.pill { position: absolute; left: 919px; top: 780px; width: 83px; height: 36px; border-radius: 16px; background: #060728; box-shadow: 0 2px 8px rgba(20, 16, 70, .5); }

/* Taskbar window previews, floating over the page */
.preview {
  position: absolute;
  left: 782px;
  top: 763px;
  width: 648px;
  height: 227px;
  padding: 12px 12px;
  border-radius: 12px;
  background: linear-gradient(100deg, #2a2950 60%, #2c2862 90%, #2a2852);
  box-shadow: 0 8px 28px rgba(30, 24, 80, .5);
  display: flex;
  gap: 24px;
}
.preview article { width: 300px; }
.preview h3 { height: 45px; display: flex; gap: 12px; font-size: 18px; line-height: 36px; color: #a9a8d0; white-space: nowrap; letter-spacing: -0.32px; }
.preview h3 svg { width: 24px; height: 24px; margin-top: 5px; }
.thumb { width: 300px; height: 158px; }
.tiny { font-size: 4px; fill: #7776a6; white-space: pre; font-family: "Noto Sans", "DejaVu Sans", sans-serif; }
.mono { font-family: "Liberation Mono", monospace; font-size: 3.9px; letter-spacing: -0.35px; fill: #8281b0; }
.dim { fill: #5a598c; }
.bright { fill: #93a6de; }

/* Taskbar */
.taskbar {
  flex: none;
  height: 72px;
  padding-bottom: 1px;
  border-top: 2px solid #2a2b52;
  background: linear-gradient(90deg, #14204a 0, #111d47 34%, #131b42 38%, #1d1438 50%, #1b1836 65%, #1f1536 82%, #131c44 96%, #121d45 100%);
  display: flex;
  align-items: center;
  color: #b2b1d9;
}
.weather { width: 571px; padding: 0 0 1px 28px; display: flex; align-items: center; position: relative; font-size: 17px; line-height: 24px; letter-spacing: -0.1px; }
.weather svg { margin-top: -4px; }
.weather b { position: absolute; left: 53px; top: -3px; font-weight: normal; color: #151445; }
.weather p { margin-left: 8px; }
.weather p span { color: #8a8ab6; }
.win { width: 35px; height: 35px; margin-left: 27px; }
.tsearch { width: 150px; height: 48px; margin-left: 22px; padding: 0 0 1px 33px; border-radius: 24px; background: #25264a; border-top: 1px solid #2d2e54; display: flex; align-items: center; gap: 8px; font-size: 17px; letter-spacing: -0.1px; }
.pins { display: flex; gap: 30px; margin-left: 19px; }
.pins svg { width: 36px; height: 36px; overflow: visible; }
.tray { margin-left: auto; display: flex; color: #a9a8cf; }
.tray svg { width: 36px; height: 36px; }
.tray .up { margin-right: 11px; }
.tray .cloud { margin-right: 13px; }
.clock { width: 112px; padding-bottom: 1px; text-align: right; font-size: 17.3px; line-height: 24px; letter-spacing: 0.15px; }
.tbell { width: 22px; height: 26px; margin: 0 31px 0 12px; }

/* Gaze heat points */
.gaze, .peaks { position: absolute; left: 0; top: 0; fill: none; pointer-events: none; stroke-linecap: round; }
.gaze { mix-blend-mode: plus-lighter; }
.gaze path { vector-effect: non-scaling-stroke; }
.gaze use { mix-blend-mode: plus-lighter; filter: url(#soft); }
.halo { stroke: rgb(0, 0, 44); stroke-width: 9px; }
.ring { stroke: rgb(0, 76, 0); stroke-width: 6px; }
.core { stroke: rgb(26, 40, 0); stroke-width: 4.5px; }
.peaks path { filter: blur(0.7px); }
.warm { stroke: #f6ffa8; stroke-width: 5.5px; }
.hot { stroke: #ffd28e; stroke-width: 3px; }
.hottest { stroke: #ff9c88; stroke-width: 4px; }
```
